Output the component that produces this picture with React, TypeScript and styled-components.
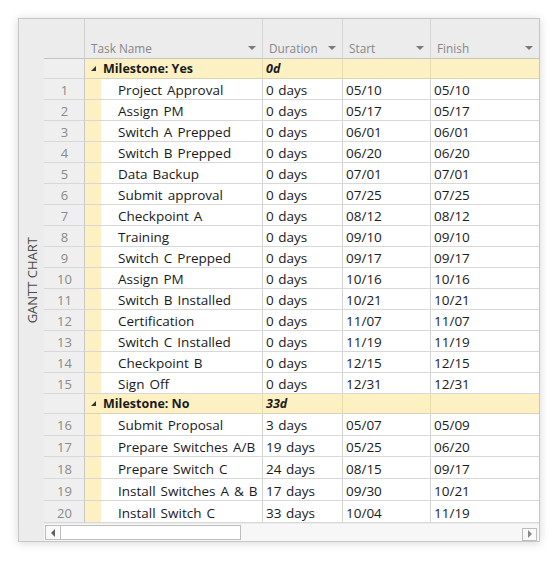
import React from "react";
import styled, { createGlobalStyle } from "styled-components";

const Global = createGlobalStyle`
  html, body { margin: 0; padding: 0; background: #ffffff; }
  body { font-family: "Open Sans", "Noto Sans", sans-serif; }
  * { box-sizing: border-box; }
`;

const Page = styled.div`
  padding: 18px 0 0 18px;
  width: 559px;
  height: 561px;
`;

const Frame = styled.div`
  display: flex;
  width: 522px;
  height: 524px;
  border: 1px solid #c6c6c6;
  background: #ececec;
  box-shadow: 0 1px 9px rgba(0, 0, 0, 0.16);
`;

const SideBar = styled.div`
  width: 25px;
  display: flex;
  align-items: center;
  justify-content: center;
  padding-left: 1px;
`;

const SideText = styled.span`
  writing-mode: vertical-rl;
  transform: rotate(180deg);
  font-size: 13px;
  color: #4a4a4a;
  white-space: nowrap;
`;

const Table = styled.div`
  flex: 1;
  display: flex;
  flex-direction: column;
`;

const Row = styled.div<{ $h: number }>`
  display: grid;
  grid-template-columns: 41px 178px 80px 88px 108px;
  height: ${(p) => p.$h}px;
`;

const HeadCell = styled.div<{ $pl: number }>`
  display: flex;
  align-items: flex-end;
  justify-content: space-between;
  padding: 0 6px 2px ${(p) => p.$pl}px;
  border-right: 1px solid #d6d6d6;
  border-bottom: 1px solid #c4c4c4;
  font-size: 11.8px;
  color: #878787;
  &:last-child { border-right: none; }
`;

const HeadCorner = styled.div`
  border-right: 1px solid #d0d0d0;
  border-bottom: 1px solid #c4c4c4;
`;

const Arrow = styled.span`
  width: 0;
  height: 0;
  border-left: 4px solid transparent;
  border-right: 4px solid transparent;
  border-top: 4px solid #7a7a7a;
  margin-bottom: 6px;
`;

const NumCell = styled.div`
  display: flex;
  align-items: center;
  justify-content: center;
  padding: 2px 0 0 1px;
  font-size: 13px;
  color: #8a8a8a;
  border-bottom: 1px solid #d8d8d8;
  border-right: 1px solid #c8c8c8;
  background: #efefef;
`;

const TaskCell = styled.div`
  display: flex;
  background: #ffffff;
  border-right: 1px solid #d4d4d4;
  border-bottom: 1px solid #d8d8d8;
`;

const Strip = styled.div`
  width: 16px;
  background: #fdf1c4;
  flex-shrink: 0;
`;

const CellText = styled.div<{ $pl: number }>`
  display: flex;
  align-items: center;
  padding: 2px 0 0 ${(p) => p.$pl}px;
  font-size: 13.5px;
  word-spacing: 1.5px;
  color: #1a1a1a;
  white-space: pre;
`;

const DataCell = styled.div`
  display: flex;
  align-items: center;
  padding: 2px 0 0 3px;
  font-size: 13.5px;
  word-spacing: 1px;
  color: #1a1a1a;
  background: #ffffff;
  white-space: nowrap;
  border-right: 1px solid #d4d4d4;
  border-bottom: 1px solid #d8d8d8;
  &:last-child { border-right: none; }
`;

const GroupCell = styled.div<{ $pl?: number }>`
  display: flex;
  align-items: center;
  padding: 1px 0 0 ${(p) => p.$pl ?? 3}px;
  font-size: 12.5px;
  font-weight: 700;
  color: #1a1a1a;
  background: #fdf1c4;
  white-space: nowrap;
  border-right: 1px solid #e6dcb0;
  border-bottom: 1px solid #dcd4b4;
  &:last-child { border-right: none; }
`;

const GroupDur = styled(GroupCell)`
  font-style: italic;
`;

const Collapse = styled.span`
  display: inline-block;
  width: 0;
  height: 0;
  border-left: 5px solid transparent;
  border-bottom: 5px solid #333333;
  margin-right: 7px;
  margin-bottom: 1px;
`;

const ScrollRow = styled.div`
  display: flex;
  align-items: center;
  height: 17px;
  margin-top: 1px;
  background: #f7f7f7;
  padding: 0 1px 0 1px;
`;

const ArrowBox = styled.div`
  width: 16px;
  height: 15px;
  border: 1px solid #bdbdbd;
  background: #fafafa;
  display: flex;
  align-items: center;
  justify-content: center;
`;

const LeftTri = styled.span`
  width: 0;
  height: 0;
  border-top: 4px solid transparent;
  border-bottom: 4px solid transparent;
  border-right: 4px solid #606060;
`;

const RightTri = styled.span`
  width: 0;
  height: 0;
  border-top: 4px solid transparent;
  border-bottom: 4px solid transparent;
  border-left: 4px solid #8a8a8a;
`;

const Thumb = styled.div`
  width: 180px;
  height: 15px;
  border: 1px solid #bdbdbd;
  border-left: none;
  background: #ffffff;
`;

const Spacer = styled.div`
  flex: 1;
`;

const RightBox = styled(ArrowBox)`
  width: 15px;
  height: 13px;
  margin-right: 1px;
  margin-top: 3px;
`;

type Task = [string, string, string, string];

const yes: Task[] = [
  ["Project Approval", "0 days", "05/10", "05/10"],
  ["Assign PM", "0 days", "05/17", "05/17"],
  ["Switch A Prepped", "0 days", "06/01", "06/01"],
  ["Switch B Prepped", "0 days", "06/20", "06/20"],
  ["Data Backup", "0 days", "07/01", "07/01"],
  ["Submit approval", "0 days", "07/25", "07/25"],
  ["Checkpoint A", "0 days", "08/12", "08/12"],
  ["Training", "0 days", "09/10", "09/10"],
  ["Switch C Prepped", "0 days", "09/17", "09/17"],
  ["Assign PM", "0 days", "10/16", "10/16"],
  ["Switch B Installed", "0 days", "10/21", "10/21"],
  ["Certification", "0 days", "11/07", "11/07"],
  ["Switch C Installed", "0 days", "11/19", "11/19"],
  ["Checkpoint B", "0 days", "12/15", "12/15"],
  ["Sign Off", "0 days", "12/31", "12/31"],
];

const no: Task[] = [
  ["Submit Proposal", "3 days", "05/07", "05/09"],
  ["Prepare Switches A/B", "19 days", "05/25", "06/20"],
  ["Prepare Switch C", "24 days", "08/15", "09/17"],
  ["Install Switches A & B", "17 days", "09/30", "10/21"],
  ["Install Switch C", "33 days", "10/04", "11/19"],
];

const TaskRow = ({ n, t, h }: { n: number; t: Task; h: number }) => (
  <Row $h={h}>
    <NumCell>{n}</NumCell>
    <TaskCell>
      <Strip />
      <CellText $pl={17}>{t[0]}</CellText>
    </TaskCell>
    <DataCell>{t[1]}</DataCell>
    <DataCell>{t[2]}</DataCell>
    <DataCell>{t[3]}</DataCell>
  </Row>
);

const GroupRow = ({ label, dur }: { label: string; dur: string }) => (
  <Row $h={20}>
    <NumCell />
    <GroupCell $pl={6}>
      <Collapse />
      {label}
    </GroupCell>
    <GroupDur>{dur}</GroupDur>
    <GroupCell />
    <GroupCell />
  </Row>
);

export default function App() {
  return (
    <Page>
      <Global />
      <Frame>
        <SideBar>
          <SideText>GANTT CHART</SideText>
        </SideBar>
        <Table>
          <Row $h={40}>
            <HeadCorner />
            <HeadCell $pl={6}>
              Task Name <Arrow />
            </HeadCell>
            <HeadCell $pl={6}>
              Duration <Arrow />
            </HeadCell>
            <HeadCell $pl={6}>
              Start <Arrow />
            </HeadCell>
            <HeadCell $pl={6}>
              Finish <Arrow />
            </HeadCell>
          </Row>
          <GroupRow label="Milestone: Yes" dur="0d" />
          {yes.map((t, i) => (
            <TaskRow key={i} n={i + 1} t={t} h={21} />
          ))}
          <GroupRow label="Milestone: No" dur="33d" />
          {no.map((t, i) => (
            <TaskRow key={i} n={i + 16} t={t} h={22} />
          ))}
          <ScrollRow>
            <ArrowBox>
              <LeftTri />
            </ArrowBox>
            <Thumb />
            <Spacer />
            <RightBox>
              <RightTri />
            </RightBox>
          </ScrollRow>
        </Table>
      </Frame>
    </Page>
  );
}
